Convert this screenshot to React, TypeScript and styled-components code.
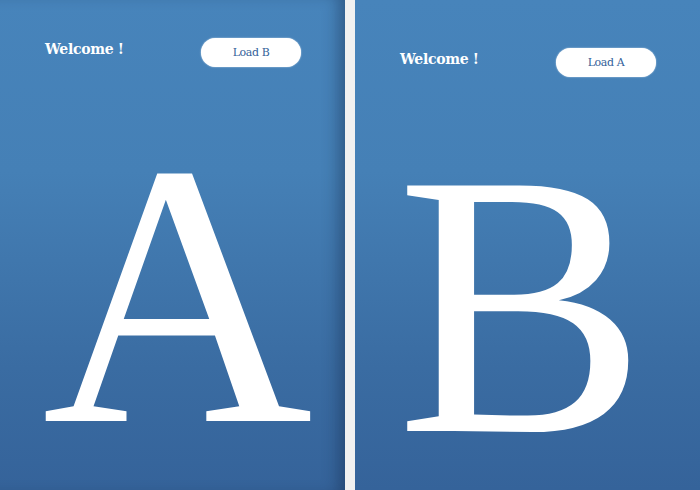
import React from "react";
import styled, { createGlobalStyle } from "styled-components";

const Global = createGlobalStyle`
  html, body { margin: 0; padding: 0; background: #f2f2f2; }
  body { width: 700px; height: 490px; }
`;

const Stage = styled.div`
  display: flex;
  gap: 10px;
  width: 700px;
  height: 490px;
  background: linear-gradient(90deg, #f6f6f6 0%, #ececec 100%);
`;

const Panel = styled.section<{ $top: number; $edge?: boolean }>`
  width: 345px;
  height: 490px;
  display: flex;
  flex-direction: column;
  padding-top: ${(p) => p.$top}px;
  box-sizing: border-box;
  background: linear-gradient(180deg, #4784bb 0%, #4580b6 35%, #3a6ca2 75%, #35639a 100%);
  box-shadow: ${(p) => (p.$edge ? "inset -14px 0 16px -8px rgba(20, 40, 70, 0.45)" : "none")};
`;

const Header = styled.header`
  display: flex;
  justify-content: space-between;
  align-items: flex-start;
  padding: 0 44px 0 45px;
`;

const Welcome = styled.h1`
  margin: 3px 0 0;
  font-family: "DejaVu Serif", "Liberation Serif", serif;
  font-weight: bold;
  font-size: 14px;
  line-height: 17px;
  letter-spacing: -0.3px;
  color: #ffffff;
`;

const LoadButton = styled.button`
  width: 100px;
  height: 29px;
  border: none;
  border-radius: 15px;
  background: #ffffff;
  box-shadow: 0 0 1.5px rgba(255, 255, 255, 0.9);
  color: #34629a;
  font-family: "DejaVu Serif", "Liberation Serif", serif;
  font-size: 11px;
  letter-spacing: -0.4px;
  padding: 0;
  cursor: pointer;
`;

const Letter = styled.div<{ $shift: number }>`
  margin-top: 40px;
  padding: 0 ${(p) => Math.max(0, -p.$shift)}px 0 ${(p) => Math.max(0, p.$shift)}px;
  text-align: center;
  font-family: "Liberation Serif", "Times New Roman", serif;
  font-size: 375px;
  line-height: 1;
  color: #ffffff;
`;

type PageProps = { letter: string; other: string; top: number; shift: number; edge?: boolean };

function Page({ letter, other, top, shift, edge }: PageProps) {
  return (
    <Panel $top={top} $edge={edge}>
      <Header>
        <Welcome>Welcome !</Welcome>
        <LoadButton>Load {other}</LoadButton>
      </Header>
      <Letter $shift={shift}>{letter}</Letter>
    </Panel>
  );
}

export default function App() {
  return (
    <>
      <Global />
      <Stage>
        <Page letter="A" other="B" top={38} shift={10} edge />
        <Page letter="B" other="A" top={48} shift={-12} />
      </Stage>
    </>
  );
}
